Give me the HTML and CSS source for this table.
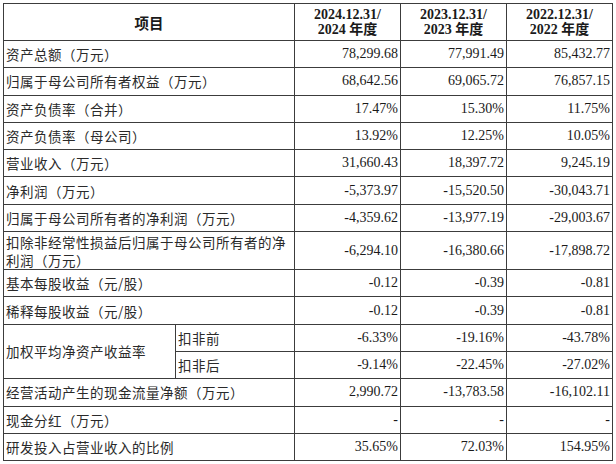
FILE: index.html
```html
<!DOCTYPE html>
<html lang="zh-CN">
<head>
<meta charset="utf-8">
<link rel="stylesheet" href="styles.css">
</head>
<body>
<table class="fin">
  <colgroup>
    <col class="c-label">
    <col class="c-sub">
    <col class="c-num">
    <col class="c-num">
    <col class="c-num3">
  </colgroup>
  <thead>
    <tr class="head">
      <th colspan="2">项目</th>
      <th>2024.12.31/<br>2024 年度</th>
      <th>2023.12.31/<br>2023 年度</th>
      <th>2022.12.31/<br>2022 年度</th>
    </tr>
  </thead>
  <tbody>
    <tr><td colspan="2" class="lbl">资产总额（万元）</td><td class="num">78,299.68</td><td class="num">77,991.49</td><td class="num">85,432.77</td></tr>
    <tr><td colspan="2" class="lbl">归属于母公司所有者权益（万元）</td><td class="num">68,642.56</td><td class="num">69,065.72</td><td class="num">76,857.15</td></tr>
    <tr><td colspan="2" class="lbl">资产负债率（合并）</td><td class="num">17.47%</td><td class="num">15.30%</td><td class="num">11.75%</td></tr>
    <tr><td colspan="2" class="lbl">资产负债率（母公司）</td><td class="num">13.92%</td><td class="num">12.25%</td><td class="num">10.05%</td></tr>
    <tr><td colspan="2" class="lbl">营业收入（万元）</td><td class="num">31,660.43</td><td class="num">18,397.72</td><td class="num">9,245.19</td></tr>
    <tr><td colspan="2" class="lbl">净利润（万元）</td><td class="num">-5,373.97</td><td class="num">-15,520.50</td><td class="num">-30,043.71</td></tr>
    <tr><td colspan="2" class="lbl">归属于母公司所有者的净利润（万元）</td><td class="num">-4,359.62</td><td class="num">-13,977.19</td><td class="num">-29,003.67</td></tr>
    <tr class="double"><td colspan="2" class="lbl">扣除非经常性损益后归属于母公司所有者的净利润（万元）</td><td class="num">-6,294.10</td><td class="num">-16,380.66</td><td class="num">-17,898.72</td></tr>
    <tr><td colspan="2" class="lbl">基本每股收益（元/股）</td><td class="num">-0.12</td><td class="num">-0.39</td><td class="num">-0.81</td></tr>
    <tr><td colspan="2" class="lbl">稀释每股收益（元/股）</td><td class="num">-0.12</td><td class="num">-0.39</td><td class="num">-0.81</td></tr>
    <tr><td rowspan="2" class="lbl">加权平均净资产收益率</td><td class="lbl">扣非前</td><td class="num">-6.33%</td><td class="num">-19.16%</td><td class="num">-43.78%</td></tr>
    <tr><td class="lbl">扣非后</td><td class="num">-9.14%</td><td class="num">-22.45%</td><td class="num">-27.02%</td></tr>
    <tr><td colspan="2" class="lbl">经营活动产生的现金流量净额（万元）</td><td class="num">2,990.72</td><td class="num">-13,783.58</td><td class="num">-16,102.11</td></tr>
    <tr><td colspan="2" class="lbl">现金分红（万元）</td><td class="num">-</td><td class="num">-</td><td class="num">-</td></tr>
    <tr><td colspan="2" class="lbl">研发投入占营业收入的比例</td><td class="num">35.65%</td><td class="num">72.03%</td><td class="num">154.95%</td></tr>
  </tbody>
</table>
</body>
</html>
```

FILE: styles.css
```css
html, body {
  margin: 0;
  padding: 0;
  background: #ffffff;
}

body {
  padding: 3px 0 0 3px;
}

.fin {
  border-collapse: collapse;
  table-layout: fixed;
  width: 609px;
  color: #1a1a1a;
  font-family: "Liberation Serif", "Noto Sans CJK SC", serif;
  font-size: 14px;
}

.c-label { width: 172px; }
.c-sub { width: 119px; }
.c-num { width: 106px; }
.c-num3 { width: 106px; }

.fin th,
.fin td {
  border: 1px solid #3c3c3c;
  padding: 0 2px;
  vertical-align: middle;
}

.head {
  height: 37px;
}

.head th {
  text-align: center;
  font-weight: bold;
  line-height: 15px;
  font-family: "Liberation Serif", "Noto Sans CJK SC", serif;
}

.head th:first-child {
  font-family: "Noto Sans CJK SC", sans-serif;
  font-size: 14.5px;
}

tbody tr {
  height: 27.3px;
}

tbody tr.double {
  height: 38px;
}

.lbl {
  font-family: "Noto Sans CJK SC", sans-serif;
  font-size: 13.5px;
  line-height: 18px;
  text-align: left;
  color: #2a2a2a;
  letter-spacing: 0.5px;
}

.num {
  text-align: right;
  font-family: "Liberation Serif", serif;
  font-size: 14px;
  line-height: 18px;
}
```
